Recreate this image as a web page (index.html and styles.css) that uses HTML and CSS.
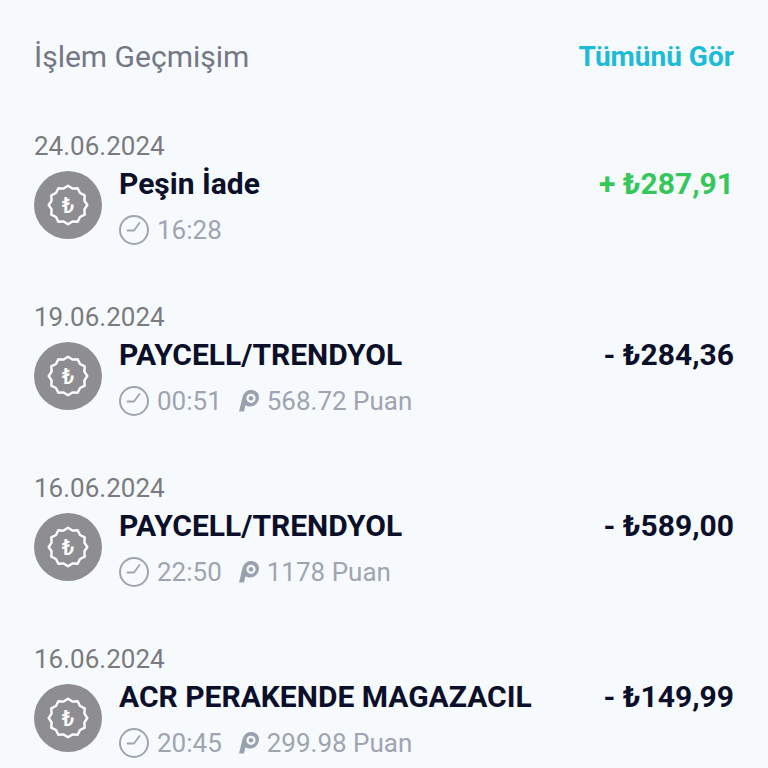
FILE: index.html
```html
<!DOCTYPE html>
<html lang="tr">
<head>
    <meta charset="UTF-8">
    <meta name="viewport" content="width=device-width, initial-scale=1.0">
    <title>İşlem Geçmişim</title>
    <link rel="stylesheet" href="styles.css">
</head>
<body>
    <!-- Shared icons -->
    <svg class="icon-defs" aria-hidden="true">
        <symbol id="icon-badge" viewBox="-34 -34 68 68">
            <polygon points="0,-19.3 4.400,-16.4 9.700,-16.7 12,-12 16.700,-9.700 16.400,-4.400 19.300,0 16.400,4.400 16.700,9.700 12,12 9.700,16.700 4.400,16.400 0,19.300 -4.400,16.400 -9.700,16.700 -12,12 -16.700,9.700 -16.400,4.400 -19.300,0 -16.400,-4.400 -16.700,-9.700 -12,-12 -9.700,-16.700 -4.400,-16.400" fill="none" stroke="#fff" stroke-width="2.4" stroke-linejoin="round"/>
            <text class="badge-text" x="0" y="8" text-anchor="middle">₺</text>
        </symbol>
        <symbol id="icon-clock" viewBox="0 0 30 30">
            <circle cx="15" cy="15" r="14" fill="none" stroke="currentColor" stroke-width="2"/>
            <path d="M8.500 15.500H15L20.500 8" fill="none" stroke="currentColor" stroke-width="1.800" stroke-linecap="round" stroke-linejoin="round"/>
        </symbol>
        <symbol id="icon-point" viewBox="0 0 20 24">
            <path fill="currentColor" fill-rule="evenodd" d="M0 22.500 3.400 8.500C4.700 3.500 8 1 12 1c4.600 0 8 3 8 7.500 0 5-4 9-9 9-1.800 0-3.200-.4-4.500-1.200L5 22.500ZM12 4.700A4.600 4.600 0 1 0 12 13.900 4.600 4.600 0 1 0 12 4.700Z"/>
            <circle cx="12" cy="9.300" r="2.300" fill="currentColor"/>
        </symbol>
    </svg>

    <main class="container">
        <header class="history-header">
            <h1>İşlem Geçmişim</h1>
            <a href="#all">Tümünü Gör</a>
        </header>

        <ul class="history-list">
            <li>
                <time class="date" datetime="2024-06-24">24.06.2024</time>
                <div class="transaction">
                    <svg class="badge"><use href="#icon-badge"/></svg>
                    <div class="details">
                        <h2>Peşin İade</h2>
                        <div class="meta">
                            <svg class="clock"><use href="#icon-clock"/></svg>
                            <span>16:28</span>
                        </div>
                    </div>
                    <span class="amount income">+ ₺287,91</span>
                </div>
            </li>
            <li>
                <time class="date" datetime="2024-06-19">19.06.2024</time>
                <div class="transaction">
                    <svg class="badge"><use href="#icon-badge"/></svg>
                    <div class="details">
                        <h2>PAYCELL/TRENDYOL</h2>
                        <div class="meta">
                            <svg class="clock"><use href="#icon-clock"/></svg>
                            <span>00:51</span>
                            <svg class="point"><use href="#icon-point"/></svg>
                            <span>568.72 Puan</span>
                        </div>
                    </div>
                    <span class="amount">- ₺284,36</span>
                </div>
            </li>
            <li>
                <time class="date" datetime="2024-06-16">16.06.2024</time>
                <div class="transaction">
                    <svg class="badge"><use href="#icon-badge"/></svg>
                    <div class="details">
                        <h2>PAYCELL/TRENDYOL</h2>
                        <div class="meta">
                            <svg class="clock"><use href="#icon-clock"/></svg>
                            <span>22:50</span>
                            <svg class="point"><use href="#icon-point"/></svg>
                            <span>1178 Puan</span>
                        </div>
                    </div>
                    <span class="amount">- ₺589,00</span>
                </div>
            </li>
            <li>
                <time class="date" datetime="2024-06-16">16.06.2024</time>
                <div class="transaction">
                    <svg class="badge"><use href="#icon-badge"/></svg>
                    <div class="details">
                        <h2>ACR PERAKENDE MAGAZACIL</h2>
                        <div class="meta">
                            <svg class="clock"><use href="#icon-clock"/></svg>
                            <span>20:45</span>
                            <svg class="point"><use href="#icon-point"/></svg>
                            <span>299.98 Puan</span>
                        </div>
                    </div>
                    <span class="amount">- ₺149,99</span>
                </div>
            </li>
        </ul>
    </main>
</body>
</html>
```
FILE: styles.css
```css
* {
    box-sizing: border-box;
    margin: 0;
    padding: 0;
}

body {
    font-family: Roboto, "Liberation Sans", sans-serif;
    color: #0b0f29;
    background-color: #f6fafd;
}

.icon-defs {
    display: none;
}

.container {
    padding: 39px 34px 8px;
}

.history-header {
    display: flex;
    justify-content: space-between;
    align-items: center;
    line-height: 36px;
    margin-bottom: 57px;
}

.history-header h1 {
    font-size: 30px;
    font-weight: 400;
    color: #757784;
}

.history-header a {
    font-size: 28px;
    font-weight: 700;
    color: #1dbbd7;
    text-decoration: none;
}

.history-list {
    list-style: none;
}

.history-list li {
    margin-bottom: 58px;
}

.history-list li:last-child {
    margin-bottom: 0;
}

.date {
    display: block;
    font-size: 26px;
    line-height: 28px;
    color: #7b7b7f;
}

.transaction {
    display: flex;
    gap: 17px;
    margin-top: 4px;
}

.badge {
    width: 68px;
    height: 68px;
    margin-top: 7px;
    border-radius: 50%;
    background-color: #8e8e92;
}

.badge-text {
    font-size: 22px;
    font-weight: 500;
    fill: #fff;
}

.details {
    flex: 1;
}

.details h2,
.amount {
    font-size: 30px;
    font-weight: 700;
    line-height: 40px;
}

.amount.income {
    color: #35c759;
}

.meta {
    display: flex;
    align-items: center;
    gap: 8px;
    margin-top: 11px;
    font-size: 26px;
    line-height: 30px;
    color: #a0a4b0;
}

.clock {
    width: 30px;
    height: 30px;
}

.point {
    width: 20px;
    height: 24px;
    margin-left: 9px;
    color: #98a2ae;
}
```
